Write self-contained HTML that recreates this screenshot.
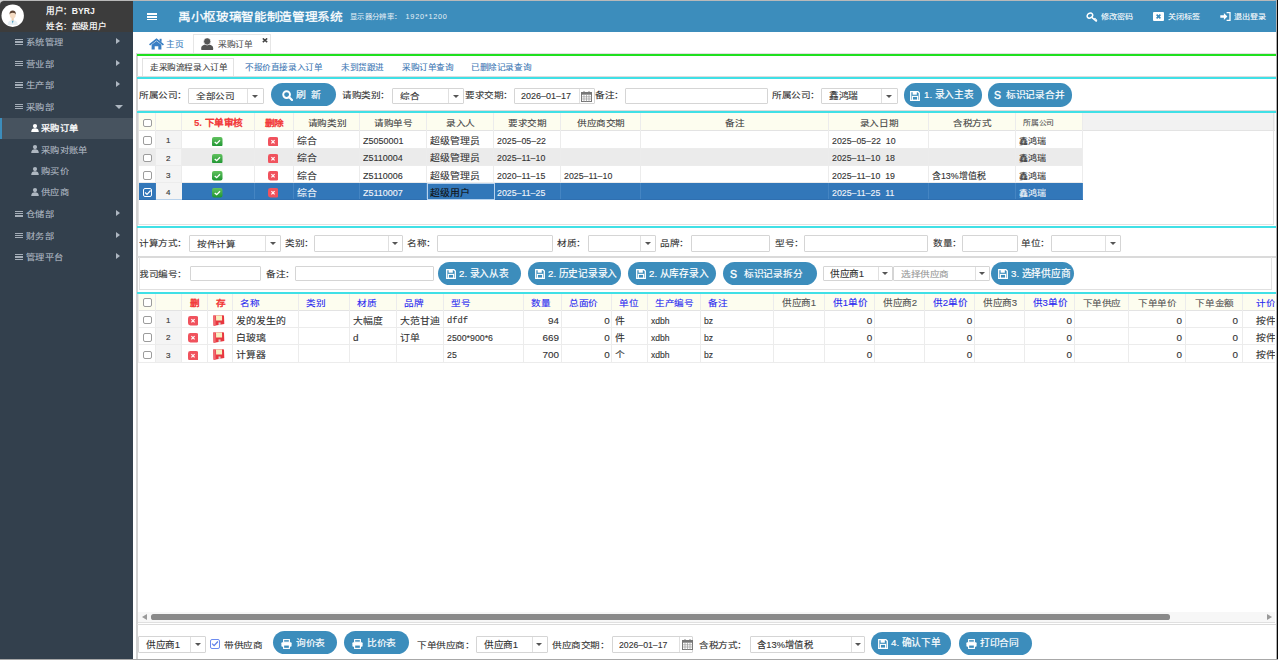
<!DOCTYPE html><html lang="zh-CN"><head><meta charset="utf-8"><style>
html,body{margin:0;padding:0}
body{width:1278px;height:660px;position:relative;overflow:hidden;background:#fff;font-family:"Liberation Sans",sans-serif;color:#333}
.t{position:absolute;white-space:nowrap;height:50px;line-height:50px;transform-origin:0 50%;-webkit-text-stroke:0.5px currentColor}
</style></head><body>
<div style="position:absolute;left:0.00px;top:0.00px;width:133.00px;height:660.00px;background:#33404d"></div>
<div style="position:absolute;left:0.00px;top:0.00px;width:133.00px;height:32.00px;background:#3c3c3c"></div>
<div style="position:absolute;left:0.00px;top:0.00px;width:5.00px;height:5.00px;background:#cfcfcf"></div>
<div style="position:absolute;left:0.00px;top:1.00px;width:133.00px;height:31.00px;background:#3c3c3c;border-top-left-radius:4px"></div>
<svg style="position:absolute;left:0.6px;top:4.4px" width="23.4" height="23.4" viewBox="0 0 24 24">
<circle cx="12" cy="12" r="11.5" fill="#fff"/>
<path d="M6.8 21.5c0.2-3.6 2-4.9 5.2-4.9s5 1.3 5.2 4.9z" fill="#e6eef3"/>
<path d="M11.1 17l0.9 3.3 0.9-3.3z" fill="#3f9ac0"/>
<rect x="10.9" y="14.4" width="2.2" height="2.6" fill="#efcfb0"/>
<ellipse cx="12" cy="11.3" rx="3" ry="3.5" fill="#f6dcc3"/>
<path d="M8.8 11c-.4-3 1.2-4.3 3.2-4.3s3.6 1.3 3.2 4.3c-.3-1.4-1.3-2.1-3.2-2.1s-2.9.7-3.2 2.1z" fill="#5e4535"/>
</svg>
<div class="t" style="left:46.20px;top:-14.40px;font-size:40.0px;transform:scale(0.2150,0.2150);color:#f4f4f4;font-weight:bold;-webkit-text-stroke:0">用户：BYRJ</div>
<div class="t" style="left:46.20px;top:1.30px;font-size:40.0px;transform:scale(0.2150,0.1892);color:#f4f4f4;font-weight:bold;-webkit-text-stroke:0">姓名：超级用户</div>
<div style="position:absolute;left:15.40px;top:39.00px;width:7.50px;height:1.25px;background:#a5aeb8"></div>
<div style="position:absolute;left:15.40px;top:41.25px;width:7.50px;height:1.25px;background:#a5aeb8"></div>
<div style="position:absolute;left:15.40px;top:43.50px;width:7.50px;height:1.25px;background:#a5aeb8"></div>
<div class="t" style="left:26.00px;top:17.00px;font-size:40.0px;transform:scale(0.2313,0.2035);color:#aeb7c1;">系统管理</div>
<div style="position:absolute;left:116.20px;top:38.25px;width:0;height:0;border-top:3.75px solid transparent;border-bottom:3.75px solid transparent;border-left:4.2px solid #aeb7c1"></div>
<div style="position:absolute;left:15.40px;top:60.50px;width:7.50px;height:1.25px;background:#a5aeb8"></div>
<div style="position:absolute;left:15.40px;top:62.75px;width:7.50px;height:1.25px;background:#a5aeb8"></div>
<div style="position:absolute;left:15.40px;top:65.00px;width:7.50px;height:1.25px;background:#a5aeb8"></div>
<div class="t" style="left:26.00px;top:38.50px;font-size:40.0px;transform:scale(0.2313,0.2035);color:#aeb7c1;">营业部</div>
<div style="position:absolute;left:116.20px;top:59.75px;width:0;height:0;border-top:3.75px solid transparent;border-bottom:3.75px solid transparent;border-left:4.2px solid #aeb7c1"></div>
<div style="position:absolute;left:15.40px;top:82.00px;width:7.50px;height:1.25px;background:#a5aeb8"></div>
<div style="position:absolute;left:15.40px;top:84.25px;width:7.50px;height:1.25px;background:#a5aeb8"></div>
<div style="position:absolute;left:15.40px;top:86.50px;width:7.50px;height:1.25px;background:#a5aeb8"></div>
<div class="t" style="left:26.00px;top:60.00px;font-size:40.0px;transform:scale(0.2313,0.2035);color:#aeb7c1;">生产部</div>
<div style="position:absolute;left:116.20px;top:81.25px;width:0;height:0;border-top:3.75px solid transparent;border-bottom:3.75px solid transparent;border-left:4.2px solid #aeb7c1"></div>
<div style="position:absolute;left:15.40px;top:103.50px;width:7.50px;height:1.25px;background:#a5aeb8"></div>
<div style="position:absolute;left:15.40px;top:105.75px;width:7.50px;height:1.25px;background:#a5aeb8"></div>
<div style="position:absolute;left:15.40px;top:108.00px;width:7.50px;height:1.25px;background:#a5aeb8"></div>
<div class="t" style="left:26.00px;top:81.50px;font-size:40.0px;transform:scale(0.2313,0.2035);color:#aeb7c1;">采购部</div>
<div style="position:absolute;left:114.50px;top:104.70px;width:0;height:0;border-left:4.0px solid transparent;border-right:4.0px solid transparent;border-top:4.2px solid #aeb7c1"></div>
<div style="position:absolute;left:0.00px;top:117.60px;width:133.00px;height:21.30px;background:#47535f"></div>
<div style="position:absolute;left:0.00px;top:117.60px;width:2.00px;height:21.30px;background:#3c8dbc"></div>
<svg style="position:absolute;left:31px;top:123.99999999999999px" width="8" height="8" viewBox="0 0 8 8"><circle cx="4" cy="2.1" r="2.1" fill="#fff"/><path d="M0.2 8c0-2.7 1.6-3.7 3.8-3.7s3.8 1 3.8 3.7z" fill="#fff"/></svg>
<div class="t" style="left:41.20px;top:103.20px;font-size:40.0px;transform:scale(0.2313,0.2035);color:#fff;-webkit-text-stroke:1.3px #fff">采购订单</div>
<svg style="position:absolute;left:31px;top:145.3px" width="8" height="8" viewBox="0 0 8 8"><circle cx="4" cy="2.1" r="2.1" fill="#aeb7c1"/><path d="M0.2 8c0-2.7 1.6-3.7 3.8-3.7s3.8 1 3.8 3.7z" fill="#aeb7c1"/></svg>
<div class="t" style="left:41.20px;top:124.50px;font-size:40.0px;transform:scale(0.2313,0.2035);color:#aeb7c1;">采购对账单</div>
<svg style="position:absolute;left:31px;top:166.60000000000002px" width="8" height="8" viewBox="0 0 8 8"><circle cx="4" cy="2.1" r="2.1" fill="#aeb7c1"/><path d="M0.2 8c0-2.7 1.6-3.7 3.8-3.7s3.8 1 3.8 3.7z" fill="#aeb7c1"/></svg>
<div class="t" style="left:41.20px;top:145.80px;font-size:40.0px;transform:scale(0.2313,0.2035);color:#aeb7c1;">购买价</div>
<svg style="position:absolute;left:31px;top:188.10000000000002px" width="8" height="8" viewBox="0 0 8 8"><circle cx="4" cy="2.1" r="2.1" fill="#aeb7c1"/><path d="M0.2 8c0-2.7 1.6-3.7 3.8-3.7s3.8 1 3.8 3.7z" fill="#aeb7c1"/></svg>
<div class="t" style="left:41.20px;top:167.30px;font-size:40.0px;transform:scale(0.2313,0.2035);color:#aeb7c1;">供应商</div>
<div style="position:absolute;left:15.40px;top:210.90px;width:7.50px;height:1.25px;background:#a5aeb8"></div>
<div style="position:absolute;left:15.40px;top:213.15px;width:7.50px;height:1.25px;background:#a5aeb8"></div>
<div style="position:absolute;left:15.40px;top:215.40px;width:7.50px;height:1.25px;background:#a5aeb8"></div>
<div class="t" style="left:26.00px;top:188.90px;font-size:40.0px;transform:scale(0.2313,0.2035);color:#aeb7c1;">仓储部</div>
<div style="position:absolute;left:116.20px;top:210.15px;width:0;height:0;border-top:3.75px solid transparent;border-bottom:3.75px solid transparent;border-left:4.2px solid #aeb7c1"></div>
<div style="position:absolute;left:15.40px;top:232.50px;width:7.50px;height:1.25px;background:#a5aeb8"></div>
<div style="position:absolute;left:15.40px;top:234.75px;width:7.50px;height:1.25px;background:#a5aeb8"></div>
<div style="position:absolute;left:15.40px;top:237.00px;width:7.50px;height:1.25px;background:#a5aeb8"></div>
<div class="t" style="left:26.00px;top:210.50px;font-size:40.0px;transform:scale(0.2313,0.2035);color:#aeb7c1;">财务部</div>
<div style="position:absolute;left:116.20px;top:231.75px;width:0;height:0;border-top:3.75px solid transparent;border-bottom:3.75px solid transparent;border-left:4.2px solid #aeb7c1"></div>
<div style="position:absolute;left:15.40px;top:254.20px;width:7.50px;height:1.25px;background:#a5aeb8"></div>
<div style="position:absolute;left:15.40px;top:256.45px;width:7.50px;height:1.25px;background:#a5aeb8"></div>
<div style="position:absolute;left:15.40px;top:258.70px;width:7.50px;height:1.25px;background:#a5aeb8"></div>
<div class="t" style="left:26.00px;top:232.20px;font-size:40.0px;transform:scale(0.2313,0.2035);color:#aeb7c1;">管理平台</div>
<div style="position:absolute;left:116.20px;top:253.45px;width:0;height:0;border-top:3.75px solid transparent;border-bottom:3.75px solid transparent;border-left:4.2px solid #aeb7c1"></div>
<div style="position:absolute;left:133.00px;top:0.00px;width:1144.00px;height:32.00px;background:#3c8dbc;border-top-right-radius:3px"></div>
<div style="position:absolute;left:3.00px;top:0.00px;width:1272.00px;height:1.00px;background:#b9b9b9"></div>
<div style="position:absolute;left:147.30px;top:13.20px;width:10.00px;height:1.70px;background:#fff"></div>
<div style="position:absolute;left:147.30px;top:15.95px;width:10.00px;height:1.70px;background:#fff"></div>
<div style="position:absolute;left:147.30px;top:18.70px;width:10.00px;height:1.70px;background:#fff"></div>
<div class="t" style="left:178.00px;top:-8.00px;font-size:40.0px;transform:scale(0.3163,0.2783);color:#fff;-webkit-text-stroke:0.9px #fff">禹小枢玻璃智能制造管理系统</div>
<div class="t" style="left:349.70px;top:-9.20px;font-size:40.0px;transform:scale(0.1825,0.1825);color:#e8f0f6;-webkit-text-stroke:0">显示器分辨率：<span style="margin-left:24px;letter-spacing:4.2px">1920*1200</span></div>
<svg style="position:absolute;left:1086.4px;top:11.6px" width="12" height="10.5" viewBox="0 0 12 10.5"><ellipse cx="3.9" cy="3.6" rx="2.9" ry="2.3" transform="rotate(-35 3.9 3.6)" fill="none" stroke="#fff" stroke-width="1.5"/><path d="M5.8 5.4l4.9 4.1M8.3 7.5l1.2-1.2M9.8 8.7l1.1-1.1" stroke="#fff" stroke-width="1.5"/></svg>
<div class="t" style="left:1101.00px;top:-8.50px;font-size:40.0px;transform:scale(0.2025,0.1782);color:#fff;">修改密码</div>
<div style="position:absolute;left:1153.30px;top:12.20px;width:11.00px;height:9.00px;background:#fff;border-radius:1px"></div>
<svg style="position:absolute;left:1153.3px;top:12.2px" width="11" height="9" viewBox="0 0 11 9"><path d="M3.6 2.6l3.8 3.8M7.4 2.6l-3.8 3.8" stroke="#3c8cbe" stroke-width="1.6"/></svg>
<div class="t" style="left:1168.00px;top:-8.50px;font-size:40.0px;transform:scale(0.2025,0.1782);color:#fff;">关闭标签</div>
<svg style="position:absolute;left:1220px;top:12.3px" width="11" height="9" viewBox="0 0 11 9"><path d="M0.3 3.2h3.6V0.9L7.4 4.5 3.9 8.1V5.8H.3z" fill="#fff"/><path d="M6.6 .7h3.4v7.6H6.6" fill="none" stroke="#fff" stroke-width="1.3"/></svg>
<div class="t" style="left:1234.00px;top:-8.50px;font-size:40.0px;transform:scale(0.2025,0.1782);color:#fff;">退出登录</div>
<svg style="position:absolute;left:148.8px;top:38px" width="15" height="11.5" viewBox="0 0 15 11.5"><path d="M7.5 0.2L0 6.2l1.1 1.3L7.5 2.5l6.4 5 1.1-1.3z" fill="#3a7fc4"/><path d="M2.6 6.8L7.5 2.9l4.9 3.9v4.7H9.3V8.3H5.7v3.2H2.6z" fill="#3a7fc4"/><rect x="10.6" y="0.8" width="2" height="3" fill="#3a7fc4"/></svg>
<div class="t" style="left:166.00px;top:18.60px;font-size:40.0px;transform:scale(0.2175,0.1914);color:#3d7fc0;">主页</div>
<div style="position:absolute;left:193.40px;top:34.00px;width:77.20px;height:21.00px;background:#fff;border:1px solid #e6e6e6;border-bottom:none;box-sizing:border-box"></div>
<svg style="position:absolute;left:201.1px;top:37.5px" width="12.5" height="12.5" viewBox="0 0 12.5 12.5"><path d="M0.2 10.5c0-3 2.3-4 6-4s6 1 6 4v0.5c0 1-.5 1.5-1.5 1.5H1.7c-1 0-1.5-.5-1.5-1.5z" fill="#555"/><circle cx="6.2" cy="3.4" r="3.6" fill="#555" stroke="#fff" stroke-width="0.7"/></svg>
<div class="t" style="left:218.00px;top:18.60px;font-size:40.0px;transform:scale(0.2175,0.1914);color:#555;">采购订单</div>
<svg style="position:absolute;left:262px;top:38px" width="6" height="4.5" viewBox="0 0 6 4.5"><path d="M0.8 0.4l4.4 3.7M5.2 0.4l-4.4 3.7" stroke="#444" stroke-width="1.5"/></svg>
<div style="position:absolute;left:136.30px;top:53.00px;width:1140.00px;height:607.00px;background:#fff;border-left:2px solid #d2d2d2;border-top:1px solid #e0e0e0;box-sizing:border-box"></div>
<div style="position:absolute;left:137.00px;top:54.00px;width:1139.00px;height:1.80px;background:#1fe01f"></div>
<div style="position:absolute;left:1275.60px;top:0.00px;width:1.40px;height:660.00px;background:#b0b0b0"></div>
<div style="position:absolute;left:1276.90px;top:0.00px;width:1.10px;height:660.00px;background:#050505"></div>
<div style="position:absolute;left:0.00px;top:659.00px;width:1278.00px;height:1.00px;background:#a8a8a8"></div>
<div style="position:absolute;left:142.20px;top:58.30px;width:92.30px;height:20.00px;background:#fff;border:1px solid #e2e2e2;border-bottom:none;box-sizing:border-box"></div>
<div class="t" style="left:149.50px;top:42.20px;font-size:40.0px;transform:scale(0.2150,0.1892);color:#444;">走采购流程录入订单</div>
<div class="t" style="left:245.20px;top:42.20px;font-size:40.0px;transform:scale(0.2150,0.1892);color:#3f79b5;">不报价直接录入订单</div>
<div class="t" style="left:341.00px;top:42.20px;font-size:40.0px;transform:scale(0.2150,0.1892);color:#3f79b5;">未到货跟进</div>
<div class="t" style="left:401.60px;top:42.20px;font-size:40.0px;transform:scale(0.2150,0.1892);color:#3f79b5;">采购订单查询</div>
<div class="t" style="left:471.30px;top:42.20px;font-size:40.0px;transform:scale(0.2150,0.1892);color:#3f79b5;">已删除记录查询</div>
<div style="position:absolute;left:137.00px;top:76.00px;width:1139.00px;height:1.00px;background:#dcdcdc"></div>
<div style="position:absolute;left:137.00px;top:77.00px;width:1139.00px;height:2.00px;background:#40e0e6"></div>
<div class="t" style="left:138.50px;top:70.30px;font-size:40.0px;transform:scale(0.2400,0.2112);color:#333;">所属公司：</div>
<div style="position:absolute;left:188.00px;top:88.30px;width:75.50px;height:15.50px;background:#fff;border:1px solid #d5d5d5;box-sizing:border-box;border-radius:1px"></div>
<div style="position:absolute;left:247.30px;top:89.30px;width:1.00px;height:13.50px;background:#e0e0e0"></div>
<div style="position:absolute;left:252.15px;top:94.75px;width:0;height:0;border-left:3.25px solid transparent;border-right:3.25px solid transparent;border-top:3.6px solid #555"></div>
<div class="t" style="left:196.00px;top:71.05px;font-size:40.0px;transform:scale(0.2400,0.2112);color:#333;">全部公司</div>
<div style="position:absolute;left:271.00px;top:83.30px;width:64.50px;height:23.10px;background:#3c8dbc;border-radius:11.55px"></div>
<svg style="position:absolute;left:282.3px;top:90.3px" width="11" height="11" viewBox="0 0 11 11"><circle cx="4.6" cy="4.6" r="3.4" fill="none" stroke="#fff" stroke-width="1.9"/><path d="M7.2 7.2l2.8 2.8" stroke="#fff" stroke-width="2.2" stroke-linecap="round"/></svg>
<div class="t" style="left:296.00px;top:69.85px;font-size:40.0px;transform:scale(0.2475,0.2178);color:#fff;-webkit-text-stroke:0.7px #fff">刷&nbsp;&nbsp;新</div>
<div class="t" style="left:342.30px;top:70.30px;font-size:40.0px;transform:scale(0.2400,0.2112);color:#333;">请购类别：</div>
<div style="position:absolute;left:392.30px;top:88.30px;width:72.00px;height:15.50px;background:#fff;border:1px solid #d5d5d5;box-sizing:border-box;border-radius:1px"></div>
<div style="position:absolute;left:447.80px;top:89.30px;width:1.00px;height:13.50px;background:#e0e0e0"></div>
<div style="position:absolute;left:452.80px;top:94.75px;width:0;height:0;border-left:3.25px solid transparent;border-right:3.25px solid transparent;border-top:3.6px solid #555"></div>
<div class="t" style="left:399.80px;top:71.05px;font-size:40.0px;transform:scale(0.2400,0.2112);color:#333;">综合</div>
<div class="t" style="left:464.50px;top:70.30px;font-size:40.0px;transform:scale(0.2400,0.2112);color:#333;">要求交期：</div>
<div style="position:absolute;left:514.30px;top:88.30px;width:80.70px;height:15.50px;background:#fff;border:1px solid #d5d5d5;box-sizing:border-box;border-radius:1px"></div>
<div class="t" style="left:521.40px;top:71.05px;font-size:40.0px;transform:scale(0.2250,0.2250);color:#333;">2026&#8211;01&#8211;17</div>
<div style="position:absolute;left:578.50px;top:89.30px;width:1.00px;height:13.50px;background:#e0e0e0"></div>
<svg style="position:absolute;left:581px;top:90.6px" width="11" height="11" viewBox="0 0 11 11"><rect x="0.5" y="1.5" width="10" height="9" fill="#fff" stroke="#777" stroke-width="1"/><rect x="0.5" y="1.5" width="10" height="2.2" fill="#777"/><path d="M3 0.2v2.2M8 0.2v2.2" stroke="#777" stroke-width="1.2"/><path d="M0.5 5.8h10M0.5 8h10M3 3.7v6.8M5.5 3.7v6.8M8 3.7v6.8" stroke="#999" stroke-width=".7"/></svg>
<div class="t" style="left:594.50px;top:70.30px;font-size:40.0px;transform:scale(0.2400,0.2112);color:#333;">备注：</div>
<div style="position:absolute;left:625.00px;top:88.30px;width:143.00px;height:15.50px;background:#fff;border:1px solid #d5d5d5;box-sizing:border-box;border-radius:1px"></div>
<div class="t" style="left:771.90px;top:70.30px;font-size:40.0px;transform:scale(0.2400,0.2112);color:#333;">所属公司：</div>
<div style="position:absolute;left:821.00px;top:88.30px;width:76.50px;height:15.50px;background:#fff;border:1px solid #d5d5d5;box-sizing:border-box;border-radius:1px"></div>
<div style="position:absolute;left:881.00px;top:89.30px;width:1.00px;height:13.50px;background:#e0e0e0"></div>
<div style="position:absolute;left:886.00px;top:94.75px;width:0;height:0;border-left:3.25px solid transparent;border-right:3.25px solid transparent;border-top:3.6px solid #555"></div>
<div class="t" style="left:829.30px;top:71.05px;font-size:40.0px;transform:scale(0.2425,0.2134);color:#333;">鑫鸿瑞</div>
<div style="position:absolute;left:904.20px;top:83.40px;width:77.50px;height:23.20px;background:#3c8dbc;border-radius:11.60px"></div>
<svg style="position:absolute;left:910px;top:91px" width="10.0" height="10.0" viewBox="0 0 10 10"><path d="M0.7 0.7h7.2l1.4 1.4v7.2H0.7z" fill="none" stroke="#fff" stroke-width="1.3"/><rect x="2.6" y="0.7" width="4.2" height="3" fill="#fff"/><rect x="2.4" y="5.4" width="5.2" height="3.9" fill="none" stroke="#fff" stroke-width="1.1"/></svg>
<div class="t" style="left:924.00px;top:70.00px;font-size:40.0px;transform:scale(0.2425,0.2425);color:#fff;-webkit-text-stroke:0.7px #fff">1. 录入主表</div>
<div style="position:absolute;left:988.00px;top:83.40px;width:83.60px;height:23.20px;background:#3c8dbc;border-radius:11.60px"></div>
<div class="t" style="left:994.40px;top:70.00px;font-size:40.0px;transform:scale(0.2625,0.2625);color:#fff;-webkit-text-stroke:1.5px #fff">S</div>
<div class="t" style="left:1006.00px;top:70.00px;font-size:40.0px;transform:scale(0.2425,0.2134);color:#fff;-webkit-text-stroke:0.7px #fff">标识记录合并</div>
<div style="position:absolute;left:137.00px;top:110.00px;width:1139.00px;height:1.00px;background:#dcdcdc"></div>
<div style="position:absolute;left:137.00px;top:111.00px;width:1139.00px;height:2.00px;background:#40e0e6"></div>
<div style="position:absolute;left:138.00px;top:113.00px;width:1137.00px;height:18.00px;background:#f2f2f2"></div>
<div style="position:absolute;left:138.00px;top:113.00px;width:945.00px;height:18.00px;background:#fdfdef"></div>
<div style="position:absolute;left:138.00px;top:130.00px;width:1137.00px;height:1.00px;background:#e3e3e3"></div>
<div style="position:absolute;left:138.00px;top:131.30px;width:945.00px;height:17.30px;background:#fff"></div>
<div style="position:absolute;left:155.50px;top:131.30px;width:26.50px;height:17.30px;background:#f4f4f4"></div>
<div style="position:absolute;left:138.00px;top:147.60px;width:945.00px;height:1.00px;background:#ececec"></div>
<div style="position:absolute;left:138.00px;top:148.60px;width:945.00px;height:17.30px;background:#ebebeb"></div>
<div style="position:absolute;left:155.50px;top:148.60px;width:26.50px;height:17.30px;background:#f4f4f4"></div>
<div style="position:absolute;left:138.00px;top:164.90px;width:945.00px;height:1.00px;background:#ececec"></div>
<div style="position:absolute;left:138.00px;top:165.90px;width:945.00px;height:17.20px;background:#fff"></div>
<div style="position:absolute;left:155.50px;top:165.90px;width:26.50px;height:17.20px;background:#f4f4f4"></div>
<div style="position:absolute;left:138.00px;top:182.10px;width:945.00px;height:1.00px;background:#ececec"></div>
<div style="position:absolute;left:138.00px;top:183.10px;width:945.00px;height:17.20px;background:#3277b9"></div>
<div style="position:absolute;left:155.50px;top:183.10px;width:26.50px;height:17.20px;background:#f4f4f4"></div>
<div style="position:absolute;left:138.00px;top:199.30px;width:945.00px;height:1.00px;background:#ececec"></div>
<div style="position:absolute;left:154.50px;top:113.00px;width:1.00px;height:87.30px;background:#ececec"></div>
<div style="position:absolute;left:181.00px;top:113.00px;width:1.00px;height:87.30px;background:#ececec"></div>
<div style="position:absolute;left:254.00px;top:113.00px;width:1.00px;height:87.30px;background:#ececec"></div>
<div style="position:absolute;left:293.00px;top:113.00px;width:1.00px;height:87.30px;background:#ececec"></div>
<div style="position:absolute;left:359.00px;top:113.00px;width:1.00px;height:87.30px;background:#ececec"></div>
<div style="position:absolute;left:426.00px;top:113.00px;width:1.00px;height:87.30px;background:#ececec"></div>
<div style="position:absolute;left:493.00px;top:113.00px;width:1.00px;height:87.30px;background:#ececec"></div>
<div style="position:absolute;left:560.00px;top:113.00px;width:1.00px;height:87.30px;background:#ececec"></div>
<div style="position:absolute;left:640.00px;top:113.00px;width:1.00px;height:87.30px;background:#ececec"></div>
<div style="position:absolute;left:828.00px;top:113.00px;width:1.00px;height:87.30px;background:#ececec"></div>
<div style="position:absolute;left:928.00px;top:113.00px;width:1.00px;height:87.30px;background:#ececec"></div>
<div style="position:absolute;left:1015.00px;top:113.00px;width:1.00px;height:87.30px;background:#ececec"></div>
<div style="position:absolute;left:1082.00px;top:113.00px;width:1.00px;height:87.30px;background:#ececec"></div>
<div style="position:absolute;left:138.00px;top:113.00px;width:1.00px;height:87.30px;background:#ececec"></div>
<div style="position:absolute;left:181.00px;top:183.10px;width:1.00px;height:17.20px;background:#4585c2"></div>
<div style="position:absolute;left:254.00px;top:183.10px;width:1.00px;height:17.20px;background:#4585c2"></div>
<div style="position:absolute;left:293.00px;top:183.10px;width:1.00px;height:17.20px;background:#4585c2"></div>
<div style="position:absolute;left:359.00px;top:183.10px;width:1.00px;height:17.20px;background:#4585c2"></div>
<div style="position:absolute;left:426.00px;top:183.10px;width:1.00px;height:17.20px;background:#4585c2"></div>
<div style="position:absolute;left:493.00px;top:183.10px;width:1.00px;height:17.20px;background:#4585c2"></div>
<div style="position:absolute;left:560.00px;top:183.10px;width:1.00px;height:17.20px;background:#4585c2"></div>
<div style="position:absolute;left:640.00px;top:183.10px;width:1.00px;height:17.20px;background:#4585c2"></div>
<div style="position:absolute;left:828.00px;top:183.10px;width:1.00px;height:17.20px;background:#4585c2"></div>
<div style="position:absolute;left:928.00px;top:183.10px;width:1.00px;height:17.20px;background:#4585c2"></div>
<div style="position:absolute;left:1015.00px;top:183.10px;width:1.00px;height:17.20px;background:#4585c2"></div>
<div style="position:absolute;left:1082.00px;top:183.10px;width:1.00px;height:17.20px;background:#4585c2"></div>
<div style="position:absolute;left:138.00px;top:199.30px;width:945.00px;height:1.00px;background:#2f6fb0"></div>
<div style="position:absolute;left:138.00px;top:183.10px;width:1.00px;height:17.20px;background:#3277b9"></div>
<div style="position:absolute;left:154.50px;top:183.10px;width:1.00px;height:17.20px;background:#3b7dbd"></div>
<div style="position:absolute;left:155.50px;top:183.10px;width:26.00px;height:17.20px;background:#f4f4f4"></div>
<div style="position:absolute;left:155.50px;top:199.30px;width:26.00px;height:1.00px;background:#b9d3ec"></div>
<div class="t" style="left:182.00px;top:98.10px;font-size:40.0px;transform:scale(0.2400,0.2400);color:#f23a3a;width:304.17px;text-align:center;font-weight:bold;-webkit-text-stroke:0.2px currentColor">5. 下单审核</div>
<div class="t" style="left:255.00px;top:98.10px;font-size:40.0px;transform:scale(0.2400,0.2112);color:#f23a3a;width:162.50px;text-align:center;font-weight:bold;-webkit-text-stroke:0.2px currentColor">删除</div>
<div class="t" style="left:294.00px;top:98.10px;font-size:40.0px;transform:scale(0.2400,0.2112);color:#444;width:275.00px;text-align:center;">请购类别</div>
<div class="t" style="left:360.00px;top:98.10px;font-size:40.0px;transform:scale(0.2400,0.2112);color:#444;width:279.17px;text-align:center;">请购单号</div>
<div class="t" style="left:427.00px;top:98.10px;font-size:40.0px;transform:scale(0.2400,0.2112);color:#444;width:279.17px;text-align:center;">录入人</div>
<div class="t" style="left:494.00px;top:98.10px;font-size:40.0px;transform:scale(0.2400,0.2112);color:#444;width:279.17px;text-align:center;">要求交期</div>
<div class="t" style="left:561.00px;top:98.10px;font-size:40.0px;transform:scale(0.2400,0.2112);color:#444;width:333.33px;text-align:center;">供应商交期</div>
<div class="t" style="left:641.00px;top:98.10px;font-size:40.0px;transform:scale(0.2400,0.2112);color:#444;width:783.33px;text-align:center;">备注</div>
<div class="t" style="left:829.00px;top:98.10px;font-size:40.0px;transform:scale(0.2400,0.2112);color:#444;width:416.67px;text-align:center;">录入日期</div>
<div class="t" style="left:929.00px;top:98.10px;font-size:40.0px;transform:scale(0.2400,0.2112);color:#444;width:362.50px;text-align:center;">含税方式</div>
<div class="t" style="left:1023.00px;top:98.10px;font-size:40.0px;transform:scale(0.1950,0.1716);color:#555;">所属公司</div>
<div style="position:absolute;left:142.7px;top:118.6px;width:9.2px;height:8.6px;border:1.2px solid #9c9c9c;border-radius:2px;background:#fff;box-sizing:border-box"></div>
<div style="position:absolute;left:142.7px;top:136.4px;width:9.2px;height:8.6px;border:1.2px solid #9c9c9c;border-radius:2px;background:#fff;box-sizing:border-box"></div>
<div class="t" style="left:155.00px;top:115.25px;font-size:40.0px;transform:scale(0.2000,0.2000);color:#3a3a3a;width:132.50px;text-align:center;-webkit-text-stroke:0.8px #3a3a3a">1</div>
<svg style="position:absolute;left:212.4px;top:136.60000000000002px" width="10.5" height="9.5" viewBox="0 0 10.5 9.5"><defs><linearGradient id="gk1" x1="0" y1="0" x2="0" y2="1"><stop offset="0" stop-color="#62c25f"/><stop offset="1" stop-color="#1e9532"/></linearGradient></defs><rect x="0" y="0" width="10.5" height="9.5" rx="2" fill="url(#gk1)"/><path d="M2.7 4.9l2 1.7 3.3-3.3" fill="none" stroke="#fff" stroke-width="1.3"/></svg>
<svg style="position:absolute;left:267.9px;top:136.60000000000002px" width="10" height="9.5" viewBox="0 0 10 9.5"><rect x="0" y="0" width="10.4" height="9.5" rx="2.4" fill="#f0525d"/><path d="M3.4 3.1l3.2 3.3M6.6 3.1l-3.2 3.3" stroke="#fff" stroke-width="1.2"/></svg>
<div class="t" style="left:296.60px;top:115.95px;font-size:40.0px;transform:scale(0.2475,0.2178);color:#333;">综合</div>
<div class="t" style="left:362.60px;top:115.95px;font-size:40.0px;transform:scale(0.2250,0.2250);color:#333;">Z5050001</div>
<div class="t" style="left:429.60px;top:115.95px;font-size:40.0px;transform:scale(0.2475,0.2178);color:#333;">超级管理员</div>
<div class="t" style="left:496.60px;top:115.95px;font-size:40.0px;transform:scale(0.2200,0.2200);color:#333;">2025–05–22</div>
<div class="t" style="left:831.60px;top:115.95px;font-size:40.0px;transform:scale(0.2200,0.2200);color:#333;">2025–05–22&nbsp;&nbsp;10</div>
<div class="t" style="left:1018.60px;top:115.95px;font-size:40.0px;transform:scale(0.2250,0.1980);color:#333;">鑫鸿瑞</div>
<div style="position:absolute;left:142.7px;top:153.7px;width:9.2px;height:8.6px;border:1.2px solid #9c9c9c;border-radius:2px;background:#fff;box-sizing:border-box"></div>
<div class="t" style="left:155.00px;top:132.55px;font-size:40.0px;transform:scale(0.2000,0.2000);color:#3a3a3a;width:132.50px;text-align:center;-webkit-text-stroke:0.8px #3a3a3a">2</div>
<svg style="position:absolute;left:212.4px;top:153.9px" width="10.5" height="9.5" viewBox="0 0 10.5 9.5"><defs><linearGradient id="gk2" x1="0" y1="0" x2="0" y2="1"><stop offset="0" stop-color="#62c25f"/><stop offset="1" stop-color="#1e9532"/></linearGradient></defs><rect x="0" y="0" width="10.5" height="9.5" rx="2" fill="url(#gk2)"/><path d="M2.7 4.9l2 1.7 3.3-3.3" fill="none" stroke="#fff" stroke-width="1.3"/></svg>
<svg style="position:absolute;left:267.9px;top:153.9px" width="10" height="9.5" viewBox="0 0 10 9.5"><rect x="0" y="0" width="10.4" height="9.5" rx="2.4" fill="#f0525d"/><path d="M3.4 3.1l3.2 3.3M6.6 3.1l-3.2 3.3" stroke="#fff" stroke-width="1.2"/></svg>
<div class="t" style="left:296.60px;top:133.25px;font-size:40.0px;transform:scale(0.2475,0.2178);color:#333;">综合</div>
<div class="t" style="left:362.60px;top:133.25px;font-size:40.0px;transform:scale(0.2250,0.2250);color:#333;">Z5110004</div>
<div class="t" style="left:429.60px;top:133.25px;font-size:40.0px;transform:scale(0.2475,0.2178);color:#333;">超级管理员</div>
<div class="t" style="left:496.60px;top:133.25px;font-size:40.0px;transform:scale(0.2200,0.2200);color:#333;">2025–11–10</div>
<div class="t" style="left:831.60px;top:133.25px;font-size:40.0px;transform:scale(0.2200,0.2200);color:#333;">2025–11–10&nbsp;&nbsp;18</div>
<div class="t" style="left:1018.60px;top:133.25px;font-size:40.0px;transform:scale(0.2250,0.1980);color:#333;">鑫鸿瑞</div>
<div style="position:absolute;left:142.7px;top:171.0px;width:9.2px;height:8.6px;border:1.2px solid #9c9c9c;border-radius:2px;background:#fff;box-sizing:border-box"></div>
<div class="t" style="left:155.00px;top:149.80px;font-size:40.0px;transform:scale(0.2000,0.2000);color:#3a3a3a;width:132.50px;text-align:center;-webkit-text-stroke:0.8px #3a3a3a">3</div>
<svg style="position:absolute;left:212.4px;top:171.20000000000002px" width="10.5" height="9.5" viewBox="0 0 10.5 9.5"><defs><linearGradient id="gk3" x1="0" y1="0" x2="0" y2="1"><stop offset="0" stop-color="#62c25f"/><stop offset="1" stop-color="#1e9532"/></linearGradient></defs><rect x="0" y="0" width="10.5" height="9.5" rx="2" fill="url(#gk3)"/><path d="M2.7 4.9l2 1.7 3.3-3.3" fill="none" stroke="#fff" stroke-width="1.3"/></svg>
<svg style="position:absolute;left:267.9px;top:171.20000000000002px" width="10" height="9.5" viewBox="0 0 10 9.5"><rect x="0" y="0" width="10.4" height="9.5" rx="2.4" fill="#f0525d"/><path d="M3.4 3.1l3.2 3.3M6.6 3.1l-3.2 3.3" stroke="#fff" stroke-width="1.2"/></svg>
<div class="t" style="left:296.60px;top:150.50px;font-size:40.0px;transform:scale(0.2475,0.2178);color:#333;">综合</div>
<div class="t" style="left:362.60px;top:150.50px;font-size:40.0px;transform:scale(0.2250,0.2250);color:#333;">Z5110006</div>
<div class="t" style="left:429.60px;top:150.50px;font-size:40.0px;transform:scale(0.2475,0.2178);color:#333;">超级管理员</div>
<div class="t" style="left:496.60px;top:150.50px;font-size:40.0px;transform:scale(0.2200,0.2200);color:#333;">2020–11–15</div>
<div class="t" style="left:563.60px;top:150.50px;font-size:40.0px;transform:scale(0.2200,0.2200);color:#333;">2025–11–10</div>
<div class="t" style="left:831.60px;top:150.50px;font-size:40.0px;transform:scale(0.2200,0.2200);color:#333;">2025–11–10&nbsp;&nbsp;19</div>
<div class="t" style="left:931.60px;top:150.50px;font-size:40.0px;transform:scale(0.2225,0.2225);color:#333;">含13%增值税</div>
<div class="t" style="left:1018.60px;top:150.50px;font-size:40.0px;transform:scale(0.2250,0.1980);color:#333;">鑫鸿瑞</div>
<div style="position:absolute;left:142.7px;top:188.2px;width:9.2px;height:8.6px;border:1.2px solid #fff;border-radius:2px;background:transparent;box-sizing:border-box"></div>
<svg style="position:absolute;left:142.7px;top:188.2px" width="9.4" height="9" viewBox="0 0 9.4 9"><path d="M2.1 4.5l1.9 1.9 3.6-3.9" fill="none" stroke="#fff" stroke-width="1.2"/></svg>
<div class="t" style="left:155.00px;top:167.00px;font-size:40.0px;transform:scale(0.2000,0.2000);color:#3a3a3a;width:132.50px;text-align:center;-webkit-text-stroke:0.8px #3a3a3a">4</div>
<svg style="position:absolute;left:212.4px;top:188.4px" width="10.5" height="9.5" viewBox="0 0 10.5 9.5"><defs><linearGradient id="gk4" x1="0" y1="0" x2="0" y2="1"><stop offset="0" stop-color="#62c25f"/><stop offset="1" stop-color="#1e9532"/></linearGradient></defs><rect x="0" y="0" width="10.5" height="9.5" rx="2" fill="url(#gk4)"/><path d="M2.7 4.9l2 1.7 3.3-3.3" fill="none" stroke="#fff" stroke-width="1.3"/></svg>
<svg style="position:absolute;left:267.9px;top:188.4px" width="10" height="9.5" viewBox="0 0 10 9.5"><rect x="0" y="0" width="10.4" height="9.5" rx="2.4" fill="#f0525d"/><path d="M3.4 3.1l3.2 3.3M6.6 3.1l-3.2 3.3" stroke="#fff" stroke-width="1.2"/></svg>
<div style="position:absolute;left:427.00px;top:183.10px;width:67.50px;height:16.70px;border:1px solid #b7d2ee;border-top-width:1.5px;border-bottom-width:1.5px;background:#3277b9;box-sizing:border-box"></div>
<div class="t" style="left:296.60px;top:167.70px;font-size:40.0px;transform:scale(0.2475,0.2178);color:#f2f5f9;">综合</div>
<div class="t" style="left:362.60px;top:167.70px;font-size:40.0px;transform:scale(0.2250,0.2250);color:#f2f5f9;">Z5110007</div>
<div class="t" style="left:429.60px;top:167.70px;font-size:40.0px;transform:scale(0.2475,0.2178);color:#111;">超级用户</div>
<div class="t" style="left:496.60px;top:167.70px;font-size:40.0px;transform:scale(0.2200,0.2200);color:#f2f5f9;">2025–11–25</div>
<div class="t" style="left:831.60px;top:167.70px;font-size:40.0px;transform:scale(0.2200,0.2200);color:#f2f5f9;">2025–11–25&nbsp;&nbsp;11</div>
<div class="t" style="left:1018.60px;top:167.70px;font-size:40.0px;transform:scale(0.2250,0.1980);color:#f2f5f9;">鑫鸿瑞</div>
<div style="position:absolute;left:1272.70px;top:113.00px;width:1.00px;height:112.00px;background:#e2e2e2"></div>
<div style="position:absolute;left:138.00px;top:224.20px;width:1135.70px;height:1.00px;background:#e2e2e2"></div>
<div style="position:absolute;left:138.00px;top:113.00px;width:1.00px;height:112.00px;background:#e2e2e2"></div>
<div style="position:absolute;left:137.00px;top:226.30px;width:1139.00px;height:2.10px;background:#40e0e6"></div>
<div class="t" style="left:138.50px;top:217.70px;font-size:40.0px;transform:scale(0.2400,0.2112);color:#333;">计算方式：</div>
<div style="position:absolute;left:188.70px;top:235.30px;width:92.10px;height:16.40px;background:#fff;border:1px solid #d5d5d5;box-sizing:border-box;border-radius:1px"></div>
<div style="position:absolute;left:265.00px;top:236.30px;width:1.00px;height:14.40px;background:#e0e0e0"></div>
<div style="position:absolute;left:269.65px;top:242.20px;width:0;height:0;border-left:3.25px solid transparent;border-right:3.25px solid transparent;border-top:3.6px solid #555"></div>
<div class="t" style="left:197.00px;top:218.50px;font-size:40.0px;transform:scale(0.2400,0.2112);color:#333;">按件计算</div>
<div class="t" style="left:284.60px;top:217.70px;font-size:40.0px;transform:scale(0.2400,0.2112);color:#333;">类别：</div>
<div style="position:absolute;left:314.30px;top:235.30px;width:88.70px;height:16.40px;background:#fff;border:1px solid #d5d5d5;box-sizing:border-box;border-radius:1px"></div>
<div style="position:absolute;left:388.00px;top:236.30px;width:1.00px;height:14.40px;background:#e0e0e0"></div>
<div style="position:absolute;left:392.25px;top:242.20px;width:0;height:0;border-left:3.25px solid transparent;border-right:3.25px solid transparent;border-top:3.6px solid #555"></div>
<div class="t" style="left:407.30px;top:217.70px;font-size:40.0px;transform:scale(0.2400,0.2112);color:#333;">名称：</div>
<div style="position:absolute;left:437.00px;top:235.30px;width:116.00px;height:16.40px;background:#fff;border:1px solid #d5d5d5;box-sizing:border-box;border-radius:1px"></div>
<div class="t" style="left:557.00px;top:217.70px;font-size:40.0px;transform:scale(0.2400,0.2112);color:#333;">材质：</div>
<div style="position:absolute;left:587.70px;top:235.30px;width:68.80px;height:16.40px;background:#fff;border:1px solid #d5d5d5;box-sizing:border-box;border-radius:1px"></div>
<div style="position:absolute;left:640.00px;top:236.30px;width:1.00px;height:14.40px;background:#e0e0e0"></div>
<div style="position:absolute;left:645.00px;top:242.20px;width:0;height:0;border-left:3.25px solid transparent;border-right:3.25px solid transparent;border-top:3.6px solid #555"></div>
<div class="t" style="left:660.00px;top:217.70px;font-size:40.0px;transform:scale(0.2400,0.2112);color:#333;">品牌：</div>
<div style="position:absolute;left:690.50px;top:235.30px;width:79.50px;height:16.40px;background:#fff;border:1px solid #d5d5d5;box-sizing:border-box;border-radius:1px"></div>
<div class="t" style="left:774.50px;top:217.70px;font-size:40.0px;transform:scale(0.2400,0.2112);color:#333;">型号：</div>
<div style="position:absolute;left:804.00px;top:235.30px;width:124.00px;height:16.40px;background:#fff;border:1px solid #d5d5d5;box-sizing:border-box;border-radius:1px"></div>
<div class="t" style="left:932.50px;top:217.70px;font-size:40.0px;transform:scale(0.2400,0.2112);color:#333;">数量：</div>
<div style="position:absolute;left:962.00px;top:235.30px;width:55.50px;height:16.40px;background:#fff;border:1px solid #d5d5d5;box-sizing:border-box;border-radius:1px"></div>
<div class="t" style="left:1020.60px;top:217.70px;font-size:40.0px;transform:scale(0.2400,0.2112);color:#333;">单位：</div>
<div style="position:absolute;left:1051.00px;top:235.30px;width:69.50px;height:16.40px;background:#fff;border:1px solid #d5d5d5;box-sizing:border-box;border-radius:1px"></div>
<div style="position:absolute;left:1105.00px;top:236.30px;width:1.00px;height:14.40px;background:#e0e0e0"></div>
<div style="position:absolute;left:1109.50px;top:242.20px;width:0;height:0;border-left:3.25px solid transparent;border-right:3.25px solid transparent;border-top:3.6px solid #555"></div>
<div style="position:absolute;left:137.00px;top:256.30px;width:1139.00px;height:1.40px;background:#dadada"></div>
<div class="t" style="left:138.50px;top:248.60px;font-size:40.0px;transform:scale(0.2400,0.2112);color:#333;">我司编号：</div>
<div style="position:absolute;left:189.50px;top:265.80px;width:71.70px;height:15.50px;background:#fff;border:1px solid #d5d5d5;box-sizing:border-box;border-radius:1px"></div>
<div class="t" style="left:265.50px;top:248.60px;font-size:40.0px;transform:scale(0.2400,0.2112);color:#333;">备注：</div>
<div style="position:absolute;left:294.80px;top:265.80px;width:139.50px;height:15.50px;background:#fff;border:1px solid #d5d5d5;box-sizing:border-box;border-radius:1px"></div>
<div style="position:absolute;left:438.00px;top:262.00px;width:82.60px;height:23.20px;background:#3c8dbc;border-radius:11.60px"></div>
<svg style="position:absolute;left:445.5px;top:269.3px" width="10.0" height="10.0" viewBox="0 0 10 10"><path d="M0.7 0.7h7.2l1.4 1.4v7.2H0.7z" fill="none" stroke="#fff" stroke-width="1.3"/><rect x="2.6" y="0.7" width="4.2" height="3" fill="#fff"/><rect x="2.4" y="5.4" width="5.2" height="3.9" fill="none" stroke="#fff" stroke-width="1.1"/></svg>
<div class="t" style="left:459.00px;top:248.60px;font-size:40.0px;transform:scale(0.2425,0.2425);color:#fff;-webkit-text-stroke:0.7px #fff">2. 录入从表</div>
<div style="position:absolute;left:527.50px;top:262.00px;width:93.50px;height:23.20px;background:#3c8dbc;border-radius:11.60px"></div>
<svg style="position:absolute;left:535px;top:269.3px" width="10.0" height="10.0" viewBox="0 0 10 10"><path d="M0.7 0.7h7.2l1.4 1.4v7.2H0.7z" fill="none" stroke="#fff" stroke-width="1.3"/><rect x="2.6" y="0.7" width="4.2" height="3" fill="#fff"/><rect x="2.4" y="5.4" width="5.2" height="3.9" fill="none" stroke="#fff" stroke-width="1.1"/></svg>
<div class="t" style="left:548.00px;top:248.60px;font-size:40.0px;transform:scale(0.2425,0.2425);color:#fff;-webkit-text-stroke:0.7px #fff">2. 历史记录录入</div>
<div style="position:absolute;left:628.00px;top:262.00px;width:88.30px;height:23.20px;background:#3c8dbc;border-radius:11.60px"></div>
<svg style="position:absolute;left:635.5px;top:269.3px" width="10.0" height="10.0" viewBox="0 0 10 10"><path d="M0.7 0.7h7.2l1.4 1.4v7.2H0.7z" fill="none" stroke="#fff" stroke-width="1.3"/><rect x="2.6" y="0.7" width="4.2" height="3" fill="#fff"/><rect x="2.4" y="5.4" width="5.2" height="3.9" fill="none" stroke="#fff" stroke-width="1.1"/></svg>
<div class="t" style="left:649.00px;top:248.60px;font-size:40.0px;transform:scale(0.2425,0.2425);color:#fff;-webkit-text-stroke:0.7px #fff">2. 从库存录入</div>
<div style="position:absolute;left:723.00px;top:262.00px;width:94.00px;height:23.20px;background:#3c8dbc;border-radius:11.60px"></div>
<div class="t" style="left:730.00px;top:248.60px;font-size:40.0px;transform:scale(0.2625,0.2625);color:#fff;-webkit-text-stroke:1.5px #fff">S</div>
<div class="t" style="left:744.00px;top:248.60px;font-size:40.0px;transform:scale(0.2425,0.2134);color:#fff;-webkit-text-stroke:0.7px #fff">标识记录拆分</div>
<div style="position:absolute;left:823.40px;top:265.80px;width:69.60px;height:15.50px;background:#fff;border:1px solid #d5d5d5;box-sizing:border-box;border-radius:1px"></div>
<div style="position:absolute;left:877.50px;top:266.80px;width:1.00px;height:13.50px;background:#e0e0e0"></div>
<div style="position:absolute;left:882.00px;top:272.25px;width:0;height:0;border-left:3.25px solid transparent;border-right:3.25px solid transparent;border-top:3.6px solid #555"></div>
<div class="t" style="left:830.00px;top:248.55px;font-size:40.0px;transform:scale(0.2400,0.2400);color:#333;">供应商1</div>
<div style="position:absolute;left:892.50px;top:265.80px;width:97.20px;height:15.50px;background:#fff;border:1px solid #d5d5d5;box-sizing:border-box;border-radius:1px"></div>
<div style="position:absolute;left:975.00px;top:266.80px;width:1.00px;height:13.50px;background:#e0e0e0"></div>
<div style="position:absolute;left:979.10px;top:272.25px;width:0;height:0;border-left:3.25px solid transparent;border-right:3.25px solid transparent;border-top:3.6px solid #555"></div>
<div class="t" style="left:901.00px;top:248.55px;font-size:40.0px;transform:scale(0.2400,0.2112);color:#999;">选择供应商</div>
<div style="position:absolute;left:990.80px;top:262.00px;width:83.20px;height:23.20px;background:#3c8dbc;border-radius:11.60px"></div>
<svg style="position:absolute;left:997.5px;top:269.3px" width="10.0" height="10.0" viewBox="0 0 10 10"><path d="M0.7 0.7h7.2l1.4 1.4v7.2H0.7z" fill="none" stroke="#fff" stroke-width="1.3"/><rect x="2.6" y="0.7" width="4.2" height="3" fill="#fff"/><rect x="2.4" y="5.4" width="5.2" height="3.9" fill="none" stroke="#fff" stroke-width="1.1"/></svg>
<div class="t" style="left:1011.00px;top:248.60px;font-size:40.0px;transform:scale(0.2425,0.2425);color:#fff;-webkit-text-stroke:0.7px #fff">3. 选择供应商</div>
<div style="position:absolute;left:1271.30px;top:257.00px;width:1.00px;height:32.50px;background:#e4e4e4"></div>
<div style="position:absolute;left:138.50px;top:257.00px;width:1.00px;height:32.50px;background:#e4e4e4"></div>
<div style="position:absolute;left:138.50px;top:288.60px;width:1133.80px;height:1.00px;background:#e0e0e0"></div>
<div style="position:absolute;left:137.00px;top:291.80px;width:1139.00px;height:1.80px;background:#40e0e6"></div>
<div style="position:absolute;left:0;top:0;width:1274.6px;height:660px;overflow:hidden">
<div style="position:absolute;left:138.00px;top:293.80px;width:1162.00px;height:17.00px;background:#f2f2f2"></div>
<div style="position:absolute;left:138.00px;top:293.80px;width:1151.00px;height:17.00px;background:#fdfdef"></div>
<div style="position:absolute;left:138.00px;top:309.80px;width:1162.00px;height:1.00px;background:#e3e3e3"></div>
<div style="position:absolute;left:138.00px;top:310.80px;width:1151.00px;height:17.30px;background:#fff"></div>
<div style="position:absolute;left:155.50px;top:310.80px;width:26.50px;height:17.30px;background:#f4f4f4"></div>
<div style="position:absolute;left:138.00px;top:327.10px;width:1151.00px;height:1.00px;background:#ececec"></div>
<div style="position:absolute;left:138.00px;top:328.10px;width:1151.00px;height:17.30px;background:#fff"></div>
<div style="position:absolute;left:155.50px;top:328.10px;width:26.50px;height:17.30px;background:#f4f4f4"></div>
<div style="position:absolute;left:138.00px;top:344.40px;width:1151.00px;height:1.00px;background:#ececec"></div>
<div style="position:absolute;left:138.00px;top:345.40px;width:1151.00px;height:17.30px;background:#fff"></div>
<div style="position:absolute;left:155.50px;top:345.40px;width:26.50px;height:17.30px;background:#f4f4f4"></div>
<div style="position:absolute;left:138.00px;top:361.70px;width:1151.00px;height:1.00px;background:#ececec"></div>
<div style="position:absolute;left:154.50px;top:293.80px;width:1.00px;height:68.90px;background:#ececec"></div>
<div style="position:absolute;left:181.00px;top:293.80px;width:1.00px;height:68.90px;background:#ececec"></div>
<div style="position:absolute;left:206.50px;top:293.80px;width:1.00px;height:68.90px;background:#ececec"></div>
<div style="position:absolute;left:231.50px;top:293.80px;width:1.00px;height:68.90px;background:#ececec"></div>
<div style="position:absolute;left:298.00px;top:293.80px;width:1.00px;height:68.90px;background:#ececec"></div>
<div style="position:absolute;left:349.00px;top:293.80px;width:1.00px;height:68.90px;background:#ececec"></div>
<div style="position:absolute;left:396.00px;top:293.80px;width:1.00px;height:68.90px;background:#ececec"></div>
<div style="position:absolute;left:442.50px;top:293.80px;width:1.00px;height:68.90px;background:#ececec"></div>
<div style="position:absolute;left:522.50px;top:293.80px;width:1.00px;height:68.90px;background:#ececec"></div>
<div style="position:absolute;left:560.50px;top:293.80px;width:1.00px;height:68.90px;background:#ececec"></div>
<div style="position:absolute;left:611.30px;top:293.80px;width:1.00px;height:68.90px;background:#ececec"></div>
<div style="position:absolute;left:646.50px;top:293.80px;width:1.00px;height:68.90px;background:#ececec"></div>
<div style="position:absolute;left:700.00px;top:293.80px;width:1.00px;height:68.90px;background:#ececec"></div>
<div style="position:absolute;left:773.30px;top:293.80px;width:1.00px;height:68.90px;background:#ececec"></div>
<div style="position:absolute;left:823.50px;top:293.80px;width:1.00px;height:68.90px;background:#ececec"></div>
<div style="position:absolute;left:873.80px;top:293.80px;width:1.00px;height:68.90px;background:#ececec"></div>
<div style="position:absolute;left:924.00px;top:293.80px;width:1.00px;height:68.90px;background:#ececec"></div>
<div style="position:absolute;left:974.30px;top:293.80px;width:1.00px;height:68.90px;background:#ececec"></div>
<div style="position:absolute;left:1024.30px;top:293.80px;width:1.00px;height:68.90px;background:#ececec"></div>
<div style="position:absolute;left:1074.40px;top:293.80px;width:1.00px;height:68.90px;background:#ececec"></div>
<div style="position:absolute;left:1127.80px;top:293.80px;width:1.00px;height:68.90px;background:#ececec"></div>
<div style="position:absolute;left:1184.70px;top:293.80px;width:1.00px;height:68.90px;background:#ececec"></div>
<div style="position:absolute;left:1242.00px;top:293.80px;width:1.00px;height:68.90px;background:#ececec"></div>
<div style="position:absolute;left:1288.00px;top:293.80px;width:1.00px;height:68.90px;background:#ececec"></div>
<div style="position:absolute;left:138.00px;top:293.80px;width:1.00px;height:68.90px;background:#ececec"></div>
<div style="position:absolute;left:142.7px;top:298.4px;width:9.2px;height:8.6px;border:1.2px solid #9c9c9c;border-radius:2px;background:#fff;box-sizing:border-box"></div>
<div class="t" style="left:190.40px;top:277.80px;font-size:40.0px;transform:scale(0.2400,0.2112);color:#f23a3a;font-weight:bold;-webkit-text-stroke:0.2px currentColor">删</div>
<div class="t" style="left:215.90px;top:277.80px;font-size:40.0px;transform:scale(0.2400,0.2112);color:#f23a3a;font-weight:bold;-webkit-text-stroke:0.2px currentColor">存</div>
<div class="t" style="left:239.50px;top:277.80px;font-size:40.0px;transform:scale(0.2400,0.2112);color:#2b2bf0;">名称</div>
<div class="t" style="left:306.00px;top:277.80px;font-size:40.0px;transform:scale(0.2400,0.2112);color:#2b2bf0;">类别</div>
<div class="t" style="left:357.00px;top:277.80px;font-size:40.0px;transform:scale(0.2400,0.2112);color:#2b2bf0;">材质</div>
<div class="t" style="left:404.00px;top:277.80px;font-size:40.0px;transform:scale(0.2400,0.2112);color:#2b2bf0;">品牌</div>
<div class="t" style="left:450.50px;top:277.80px;font-size:40.0px;transform:scale(0.2400,0.2112);color:#2b2bf0;">型号</div>
<div class="t" style="left:530.50px;top:277.80px;font-size:40.0px;transform:scale(0.2400,0.2112);color:#2b2bf0;">数量</div>
<div class="t" style="left:568.50px;top:277.80px;font-size:40.0px;transform:scale(0.2400,0.2112);color:#2b2bf0;">总面价</div>
<div class="t" style="left:619.30px;top:277.80px;font-size:40.0px;transform:scale(0.2400,0.2112);color:#2b2bf0;">单位</div>
<div class="t" style="left:654.50px;top:277.80px;font-size:40.0px;transform:scale(0.2400,0.2112);color:#2b2bf0;">生产编号</div>
<div class="t" style="left:708.00px;top:277.80px;font-size:40.0px;transform:scale(0.2400,0.2112);color:#2b2bf0;">备注</div>
<div class="t" style="left:774.30px;top:277.80px;font-size:40.0px;transform:scale(0.2400,0.2400);color:#555;width:209.17px;text-align:center;">供应商1</div>
<div class="t" style="left:824.50px;top:277.80px;font-size:40.0px;transform:scale(0.2400,0.2400);color:#2b2bf0;width:209.58px;text-align:center;">供1单价</div>
<div class="t" style="left:874.80px;top:277.80px;font-size:40.0px;transform:scale(0.2400,0.2400);color:#555;width:209.17px;text-align:center;">供应商2</div>
<div class="t" style="left:925.00px;top:277.80px;font-size:40.0px;transform:scale(0.2400,0.2400);color:#2b2bf0;width:209.58px;text-align:center;">供2单价</div>
<div class="t" style="left:975.30px;top:277.80px;font-size:40.0px;transform:scale(0.2400,0.2400);color:#555;width:208.33px;text-align:center;">供应商3</div>
<div class="t" style="left:1025.30px;top:277.80px;font-size:40.0px;transform:scale(0.2400,0.2400);color:#2b2bf0;width:208.75px;text-align:center;">供3单价</div>
<div class="t" style="left:1075.40px;top:277.80px;font-size:40.0px;transform:scale(0.2400,0.2112);color:#555;width:222.50px;text-align:center;">下单供应</div>
<div class="t" style="left:1128.80px;top:277.80px;font-size:40.0px;transform:scale(0.2400,0.2112);color:#555;width:237.08px;text-align:center;">下单单价</div>
<div class="t" style="left:1185.70px;top:277.80px;font-size:40.0px;transform:scale(0.2400,0.2112);color:#555;width:238.75px;text-align:center;">下单金额</div>
<div class="t" style="left:1243.00px;top:277.80px;font-size:40.0px;transform:scale(0.2400,0.2112);color:#2b2bf0;width:191.67px;text-align:center;">计价</div>
<div style="position:absolute;left:142.7px;top:315.90000000000003px;width:9.2px;height:8.6px;border:1.2px solid #9c9c9c;border-radius:2px;background:#fff;box-sizing:border-box"></div>
<div class="t" style="left:154.90px;top:295.05px;font-size:40.0px;transform:scale(0.2000,0.2000);color:#3a3a3a;width:132.50px;text-align:center;-webkit-text-stroke:0.8px #3a3a3a">1</div>
<svg style="position:absolute;left:188.1px;top:316.1px" width="10" height="9.5" viewBox="0 0 10 9.5"><rect x="0" y="0" width="10.4" height="9.5" rx="2.4" fill="#f0525d"/><path d="M3.4 3.1l3.2 3.3M6.6 3.1l-3.2 3.3" stroke="#fff" stroke-width="1.2"/></svg>
<svg style="position:absolute;left:213.3px;top:314.6px" width="11.5" height="11" viewBox="0 0 11.5 11"><path d="M0.2 0.4L10.2 0.2Q11 .2 11 1L11.3 8.9 1.2 10.8Q.5 10.9 .5 10.2z" fill="#e8373f"/><path d="M0.2 0.4h2.2l.3 10.2-1.5.2Q.5 10.9 .5 10.2z" fill="#f06a70"/><path d="M3 0.6l6-.2.1 5-6 .2z" fill="#f7f0c2"/><path d="M5.5 7.6l2-.2.1 2.5-2 .3z" fill="#d9d3d3"/></svg>
<div class="t" style="left:235.50px;top:295.85px;font-size:40.0px;transform:scale(0.2475,0.2178);color:#333;">发的发生的</div>
<div class="t" style="left:353.00px;top:295.85px;font-size:40.0px;transform:scale(0.2475,0.2178);color:#333;">大幅度</div>
<div class="t" style="left:400.00px;top:295.85px;font-size:40.0px;transform:scale(0.2475,0.2178);color:#333;">大范甘迪</div>
<div class="t" style="left:446.50px;top:295.85px;font-size:40.0px;transform:scale(0.2200,0.2200);color:#333;font-family:'Liberation Mono',monospace">dfdf</div>
<div class="t" style="left:523.50px;top:295.85px;font-size:40.0px;transform:scale(0.2475,0.2475);color:#333;width:141.41px;text-align:right;">94</div>
<div class="t" style="left:561.50px;top:295.85px;font-size:40.0px;transform:scale(0.2475,0.2475);color:#333;width:193.13px;text-align:right;">0</div>
<div class="t" style="left:615.30px;top:295.85px;font-size:40.0px;transform:scale(0.2475,0.2178);color:#333;">件</div>
<div class="t" style="left:650.50px;top:295.85px;font-size:40.0px;transform:scale(0.2150,0.2150);color:#333;">xdbh</div>
<div class="t" style="left:704.00px;top:295.85px;font-size:40.0px;transform:scale(0.2150,0.2150);color:#333;">bz</div>
<div class="t" style="left:824.50px;top:295.85px;font-size:40.0px;transform:scale(0.2475,0.2475);color:#333;width:191.11px;text-align:right;">0</div>
<div class="t" style="left:925.00px;top:295.85px;font-size:40.0px;transform:scale(0.2475,0.2475);color:#333;width:191.11px;text-align:right;">0</div>
<div class="t" style="left:1025.30px;top:295.85px;font-size:40.0px;transform:scale(0.2475,0.2475);color:#333;width:190.30px;text-align:right;">0</div>
<div class="t" style="left:1128.80px;top:295.85px;font-size:40.0px;transform:scale(0.2475,0.2475);color:#333;width:214.55px;text-align:right;">0</div>
<div class="t" style="left:1185.70px;top:295.85px;font-size:40.0px;transform:scale(0.2475,0.2475);color:#333;width:210.51px;text-align:right;">0</div>
<div class="t" style="left:1243.00px;top:295.85px;font-size:40.0px;transform:scale(0.2475,0.2178);color:#333;width:185.86px;text-align:center;">按件</div>
<div style="position:absolute;left:142.7px;top:333.20000000000005px;width:9.2px;height:8.6px;border:1.2px solid #9c9c9c;border-radius:2px;background:#fff;box-sizing:border-box"></div>
<div class="t" style="left:154.90px;top:312.35px;font-size:40.0px;transform:scale(0.2000,0.2000);color:#3a3a3a;width:132.50px;text-align:center;-webkit-text-stroke:0.8px #3a3a3a">2</div>
<svg style="position:absolute;left:188.1px;top:333.40000000000003px" width="10" height="9.5" viewBox="0 0 10 9.5"><rect x="0" y="0" width="10.4" height="9.5" rx="2.4" fill="#f0525d"/><path d="M3.4 3.1l3.2 3.3M6.6 3.1l-3.2 3.3" stroke="#fff" stroke-width="1.2"/></svg>
<svg style="position:absolute;left:213.3px;top:331.90000000000003px" width="11.5" height="11" viewBox="0 0 11.5 11"><path d="M0.2 0.4L10.2 0.2Q11 .2 11 1L11.3 8.9 1.2 10.8Q.5 10.9 .5 10.2z" fill="#e8373f"/><path d="M0.2 0.4h2.2l.3 10.2-1.5.2Q.5 10.9 .5 10.2z" fill="#f06a70"/><path d="M3 0.6l6-.2.1 5-6 .2z" fill="#f7f0c2"/><path d="M5.5 7.6l2-.2.1 2.5-2 .3z" fill="#d9d3d3"/></svg>
<div class="t" style="left:235.50px;top:313.15px;font-size:40.0px;transform:scale(0.2475,0.2178);color:#333;">白玻璃</div>
<div class="t" style="left:353.00px;top:313.15px;font-size:40.0px;transform:scale(0.2475,0.2475);color:#333;">d</div>
<div class="t" style="left:400.00px;top:313.15px;font-size:40.0px;transform:scale(0.2475,0.2178);color:#333;">订单</div>
<div class="t" style="left:446.50px;top:313.15px;font-size:40.0px;transform:scale(0.2200,0.2200);color:#333;">2500*900*6</div>
<div class="t" style="left:523.50px;top:313.15px;font-size:40.0px;transform:scale(0.2475,0.2475);color:#333;width:141.41px;text-align:right;">669</div>
<div class="t" style="left:561.50px;top:313.15px;font-size:40.0px;transform:scale(0.2475,0.2475);color:#333;width:193.13px;text-align:right;">0</div>
<div class="t" style="left:615.30px;top:313.15px;font-size:40.0px;transform:scale(0.2475,0.2178);color:#333;">件</div>
<div class="t" style="left:650.50px;top:313.15px;font-size:40.0px;transform:scale(0.2150,0.2150);color:#333;">xdbh</div>
<div class="t" style="left:704.00px;top:313.15px;font-size:40.0px;transform:scale(0.2150,0.2150);color:#333;">bz</div>
<div class="t" style="left:824.50px;top:313.15px;font-size:40.0px;transform:scale(0.2475,0.2475);color:#333;width:191.11px;text-align:right;">0</div>
<div class="t" style="left:925.00px;top:313.15px;font-size:40.0px;transform:scale(0.2475,0.2475);color:#333;width:191.11px;text-align:right;">0</div>
<div class="t" style="left:1025.30px;top:313.15px;font-size:40.0px;transform:scale(0.2475,0.2475);color:#333;width:190.30px;text-align:right;">0</div>
<div class="t" style="left:1128.80px;top:313.15px;font-size:40.0px;transform:scale(0.2475,0.2475);color:#333;width:214.55px;text-align:right;">0</div>
<div class="t" style="left:1185.70px;top:313.15px;font-size:40.0px;transform:scale(0.2475,0.2475);color:#333;width:210.51px;text-align:right;">0</div>
<div class="t" style="left:1243.00px;top:313.15px;font-size:40.0px;transform:scale(0.2475,0.2178);color:#333;width:185.86px;text-align:center;">按件</div>
<div style="position:absolute;left:142.7px;top:350.5px;width:9.2px;height:8.6px;border:1.2px solid #9c9c9c;border-radius:2px;background:#fff;box-sizing:border-box"></div>
<div class="t" style="left:154.90px;top:329.65px;font-size:40.0px;transform:scale(0.2000,0.2000);color:#3a3a3a;width:132.50px;text-align:center;-webkit-text-stroke:0.8px #3a3a3a">3</div>
<svg style="position:absolute;left:188.1px;top:350.7px" width="10" height="9.5" viewBox="0 0 10 9.5"><rect x="0" y="0" width="10.4" height="9.5" rx="2.4" fill="#f0525d"/><path d="M3.4 3.1l3.2 3.3M6.6 3.1l-3.2 3.3" stroke="#fff" stroke-width="1.2"/></svg>
<svg style="position:absolute;left:213.3px;top:349.2px" width="11.5" height="11" viewBox="0 0 11.5 11"><path d="M0.2 0.4L10.2 0.2Q11 .2 11 1L11.3 8.9 1.2 10.8Q.5 10.9 .5 10.2z" fill="#e8373f"/><path d="M0.2 0.4h2.2l.3 10.2-1.5.2Q.5 10.9 .5 10.2z" fill="#f06a70"/><path d="M3 0.6l6-.2.1 5-6 .2z" fill="#f7f0c2"/><path d="M5.5 7.6l2-.2.1 2.5-2 .3z" fill="#d9d3d3"/></svg>
<div class="t" style="left:235.50px;top:330.45px;font-size:40.0px;transform:scale(0.2475,0.2178);color:#333;">计算器</div>
<div class="t" style="left:446.50px;top:330.45px;font-size:40.0px;transform:scale(0.2200,0.2200);color:#333;">25</div>
<div class="t" style="left:523.50px;top:330.45px;font-size:40.0px;transform:scale(0.2475,0.2475);color:#333;width:141.41px;text-align:right;">700</div>
<div class="t" style="left:561.50px;top:330.45px;font-size:40.0px;transform:scale(0.2475,0.2475);color:#333;width:193.13px;text-align:right;">0</div>
<div class="t" style="left:615.30px;top:330.45px;font-size:40.0px;transform:scale(0.2475,0.2178);color:#333;">个</div>
<div class="t" style="left:650.50px;top:330.45px;font-size:40.0px;transform:scale(0.2150,0.2150);color:#333;">xdbh</div>
<div class="t" style="left:704.00px;top:330.45px;font-size:40.0px;transform:scale(0.2150,0.2150);color:#333;">bz</div>
<div class="t" style="left:824.50px;top:330.45px;font-size:40.0px;transform:scale(0.2475,0.2475);color:#333;width:191.11px;text-align:right;">0</div>
<div class="t" style="left:925.00px;top:330.45px;font-size:40.0px;transform:scale(0.2475,0.2475);color:#333;width:191.11px;text-align:right;">0</div>
<div class="t" style="left:1025.30px;top:330.45px;font-size:40.0px;transform:scale(0.2475,0.2475);color:#333;width:190.30px;text-align:right;">0</div>
<div class="t" style="left:1128.80px;top:330.45px;font-size:40.0px;transform:scale(0.2475,0.2475);color:#333;width:214.55px;text-align:right;">0</div>
<div class="t" style="left:1185.70px;top:330.45px;font-size:40.0px;transform:scale(0.2475,0.2475);color:#333;width:210.51px;text-align:right;">0</div>
<div class="t" style="left:1243.00px;top:330.45px;font-size:40.0px;transform:scale(0.2475,0.2178);color:#333;width:185.86px;text-align:center;">按件</div>
<div style="position:absolute;left:138.00px;top:612.00px;width:1137.00px;height:10.00px;background:#f7f7f7"></div>
<div style="position:absolute;left:142.00px;top:613.50px;width:0;height:0;border-top:3.5px solid transparent;border-bottom:3.5px solid transparent;border-right:5px solid #9a9a9a"></div>
<div style="position:absolute;left:151.00px;top:614.40px;width:1019.30px;height:5.20px;background:#8a8a8a;border-radius:2.6px"></div>
<div style="position:absolute;left:1266.50px;top:613.50px;width:0;height:0;border-top:3.5px solid transparent;border-bottom:3.5px solid transparent;border-left:5px solid #9a9a9a"></div>
</div>
<div style="position:absolute;left:138.00px;top:622.00px;width:1137.00px;height:1.00px;background:#e0e0e0"></div>
<div style="position:absolute;left:137.00px;top:624.00px;width:1139.00px;height:1.00px;background:#dcdcdc"></div>
<div style="position:absolute;left:138.40px;top:636.40px;width:67.90px;height:16.30px;background:#fff;border:1px solid #d5d5d5;box-sizing:border-box;border-radius:1px"></div>
<div style="position:absolute;left:189.70px;top:637.40px;width:1.00px;height:14.30px;background:#e0e0e0"></div>
<div style="position:absolute;left:194.75px;top:643.25px;width:0;height:0;border-left:3.25px solid transparent;border-right:3.25px solid transparent;border-top:3.6px solid #555"></div>
<div class="t" style="left:145.50px;top:619.55px;font-size:40.0px;transform:scale(0.2400,0.2400);color:#333;">供应商1</div>
<div style="position:absolute;left:210.00px;top:639.00px;width:9.50px;height:9.50px;border:1.2px solid #6d8cf0;border-radius:2px;box-sizing:border-box"></div>
<svg style="position:absolute;left:210px;top:639px" width="9.5" height="9.5" viewBox="0 0 9.5 9.5"><path d="M2.1 4.6l2 2 3.8-4.1" fill="none" stroke="#5f7fe8" stroke-width="1.3"/></svg>
<div class="t" style="left:224.00px;top:619.50px;font-size:40.0px;transform:scale(0.2400,0.2112);color:#333;">带供应商</div>
<div style="position:absolute;left:273.00px;top:631.40px;width:64.00px;height:23.00px;background:#3c8dbc;border-radius:11.50px"></div>
<svg style="position:absolute;left:281px;top:638.5px" width="11" height="10" viewBox="0 0 11 10"><rect x="2.6" y="0.6" width="5.8" height="2.6" fill="none" stroke="#fff" stroke-width="1.1"/><rect x="0.4" y="3.2" width="10.2" height="4.6" rx="1" fill="#fff"/><rect x="2.6" y="6" width="5.8" height="3.4" fill="#3c8dbc" stroke="#fff" stroke-width="1.1"/></svg>
<div class="t" style="left:296.00px;top:617.90px;font-size:40.0px;transform:scale(0.2425,0.2134);color:#fff;-webkit-text-stroke:0.7px #fff">询价表</div>
<div style="position:absolute;left:344.00px;top:631.40px;width:65.00px;height:23.00px;background:#3c8dbc;border-radius:11.50px"></div>
<svg style="position:absolute;left:352px;top:638.5px" width="11" height="10" viewBox="0 0 11 10"><rect x="2.6" y="0.6" width="5.8" height="2.6" fill="none" stroke="#fff" stroke-width="1.1"/><rect x="0.4" y="3.2" width="10.2" height="4.6" rx="1" fill="#fff"/><rect x="2.6" y="6" width="5.8" height="3.4" fill="#3c8dbc" stroke="#fff" stroke-width="1.1"/></svg>
<div class="t" style="left:367.00px;top:617.90px;font-size:40.0px;transform:scale(0.2425,0.2134);color:#fff;-webkit-text-stroke:0.7px #fff">比价表</div>
<div class="t" style="left:416.80px;top:619.50px;font-size:40.0px;transform:scale(0.2400,0.2112);color:#333;">下单供应商：</div>
<div style="position:absolute;left:476.00px;top:636.40px;width:71.50px;height:16.30px;background:#fff;border:1px solid #d5d5d5;box-sizing:border-box;border-radius:1px"></div>
<div style="position:absolute;left:531.70px;top:637.40px;width:1.00px;height:14.30px;background:#e0e0e0"></div>
<div style="position:absolute;left:536.35px;top:643.25px;width:0;height:0;border-left:3.25px solid transparent;border-right:3.25px solid transparent;border-top:3.6px solid #555"></div>
<div class="t" style="left:484.00px;top:619.55px;font-size:40.0px;transform:scale(0.2400,0.2400);color:#333;">供应商1</div>
<div class="t" style="left:551.80px;top:619.50px;font-size:40.0px;transform:scale(0.2400,0.2112);color:#333;">供应商交期：</div>
<div style="position:absolute;left:611.70px;top:636.40px;width:81.80px;height:16.30px;background:#fff;border:1px solid #d5d5d5;box-sizing:border-box;border-radius:1px"></div>
<div class="t" style="left:619.00px;top:619.55px;font-size:40.0px;transform:scale(0.2175,0.2175);color:#333;">2026–01–17</div>
<div style="position:absolute;left:679.30px;top:637.40px;width:1.00px;height:14.30px;background:#e0e0e0"></div>
<svg style="position:absolute;left:681.8px;top:639px" width="11" height="11" viewBox="0 0 11 11"><rect x="0.5" y="1.5" width="10" height="9" fill="#fff" stroke="#777" stroke-width="1"/><rect x="0.5" y="1.5" width="10" height="2.2" fill="#777"/><path d="M3 0.2v2.2M8 0.2v2.2" stroke="#777" stroke-width="1.2"/><path d="M0.5 5.8h10M0.5 8h10M3 3.7v6.8M5.5 3.7v6.8M8 3.7v6.8" stroke="#999" stroke-width=".7"/></svg>
<div class="t" style="left:699.00px;top:619.50px;font-size:40.0px;transform:scale(0.2400,0.2112);color:#333;">含税方式：</div>
<div style="position:absolute;left:749.60px;top:636.40px;width:115.40px;height:16.30px;background:#fff;border:1px solid #d5d5d5;box-sizing:border-box;border-radius:1px"></div>
<div style="position:absolute;left:851.00px;top:637.40px;width:1.00px;height:14.30px;background:#e0e0e0"></div>
<div style="position:absolute;left:854.75px;top:643.25px;width:0;height:0;border-left:3.25px solid transparent;border-right:3.25px solid transparent;border-top:3.6px solid #555"></div>
<div class="t" style="left:757.00px;top:619.55px;font-size:40.0px;transform:scale(0.2325,0.2325);color:#333;">含13%增值税</div>
<div style="position:absolute;left:870.50px;top:631.80px;width:80.50px;height:22.80px;background:#3c8dbc;border-radius:11.40px"></div>
<svg style="position:absolute;left:877.5px;top:638.6px" width="10.0" height="10.0" viewBox="0 0 10 10"><path d="M0.7 0.7h7.2l1.4 1.4v7.2H0.7z" fill="none" stroke="#fff" stroke-width="1.3"/><rect x="2.6" y="0.7" width="4.2" height="3" fill="#fff"/><rect x="2.4" y="5.4" width="5.2" height="3.9" fill="none" stroke="#fff" stroke-width="1.1"/></svg>
<div class="t" style="left:891.00px;top:618.20px;font-size:40.0px;transform:scale(0.2425,0.2425);color:#fff;-webkit-text-stroke:0.7px #fff">4. 确认下单</div>
<div style="position:absolute;left:958.60px;top:631.80px;width:73.80px;height:22.80px;background:#3c8dbc;border-radius:11.40px"></div>
<svg style="position:absolute;left:966px;top:639px" width="11" height="10" viewBox="0 0 11 10"><rect x="2.6" y="0.6" width="5.8" height="2.6" fill="none" stroke="#fff" stroke-width="1.1"/><rect x="0.4" y="3.2" width="10.2" height="4.6" rx="1" fill="#fff"/><rect x="2.6" y="6" width="5.8" height="3.4" fill="#3c8dbc" stroke="#fff" stroke-width="1.1"/></svg>
<div class="t" style="left:980.00px;top:618.20px;font-size:40.0px;transform:scale(0.2425,0.2134);color:#fff;-webkit-text-stroke:0.7px #fff">打印合同</div>
</body></html>
